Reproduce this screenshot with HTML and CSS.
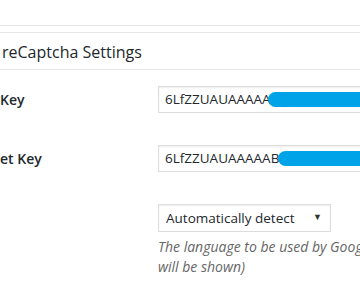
FILE: index.html
```html
<!DOCTYPE html>
<html>
<head>
<meta charset="utf-8">
<link rel="stylesheet" href="styles.css">
</head>
<body>
<div class="page">
  <div class="sep"></div>
  <div class="box">
    <h2 class="box-title">reCaptcha Settings</h2>
    <div class="form">
      <div class="label">Key</div>
      <div class="field">
        <div class="input">6LfZZUAUAAAAA<span class="redact r1"></span></div>
      </div>
      <div class="label">et Key</div>
      <div class="field">
        <div class="input">6LfZZUAUAAAAAB<span class="redact r2"></span></div>
      </div>
      <div class="label"></div>
      <div class="field">
        <div class="select"><span>Automatically detect</span><span class="arrow">▼</span></div>
        <p class="desc">The language to be used by Google reCaptcha<br>will be shown)</p>
      </div>
    </div>
  </div>
</div>
</body>
</html>
```
FILE: styles.css
```css
html, body {
  margin: 0;
  padding: 0;
  background: #fff;
  overflow: hidden;
}
.page {
  width: 360px;
  height: 308px;
  overflow: hidden;
  padding-top: 25px;
  box-sizing: border-box;
  font-family: "Open Sans", "Noto Sans", sans-serif;
  color: #23282d;
}
.sep {
  height: 0;
  border-top: 1px solid #e5e5e5;
  margin-bottom: 6px;
}
.box {
  border-top: 1px solid #e5e5e5;
}
.box-title {
  margin: 0;
  height: 37px;
  box-sizing: border-box;
  border-bottom: 1px solid #e5e5e5;
  font-size: 16px;
  font-weight: 400;
  line-height: 20px;
  padding: 9px 0 0 2px;
  white-space: nowrap;
}
.form {
  display: grid;
  grid-template-columns: 158px 1fr;
  row-gap: 32px;
  padding-top: 16px;
}
.label {
  font-size: 14px;
  font-weight: 600;
  line-height: 27px;
  white-space: nowrap;
}
.field {
  min-width: 0;
}
.input {
  position: relative;
  width: 260px;
  height: 27px;
  box-sizing: border-box;
  border: 1px solid #ddd;
  box-shadow: inset 0 1px 2px rgba(0,0,0,.07);
  padding: 0 6px;
  font-size: 13.5px;
  line-height: 25px;
  white-space: nowrap;
}
.redact {
  position: absolute;
  top: 5px;
  height: 15px;
  right: 0;
  background: #00a2e8;
  border-radius: 8px 0 0 8px;
}
.r1 { left: 109px; }
.r2 { left: 119px; }
.select {
  width: 173px;
  height: 28px;
  box-sizing: border-box;
  border: 1px solid #ddd;
  box-shadow: inset 0 1px 2px rgba(0,0,0,.07);
  padding: 0 8px 0 7px;
  display: flex;
  align-items: center;
  justify-content: space-between;
  font-size: 13.5px;
  white-space: nowrap;
}
.arrow {
  font-size: 9px;
  color: #333;
  margin-top: -4px;
}
.desc {
  margin: 5px 0 0;
  font-size: 14px;
  font-style: italic;
  color: #666;
  line-height: 20px;
  white-space: nowrap;
}
```
